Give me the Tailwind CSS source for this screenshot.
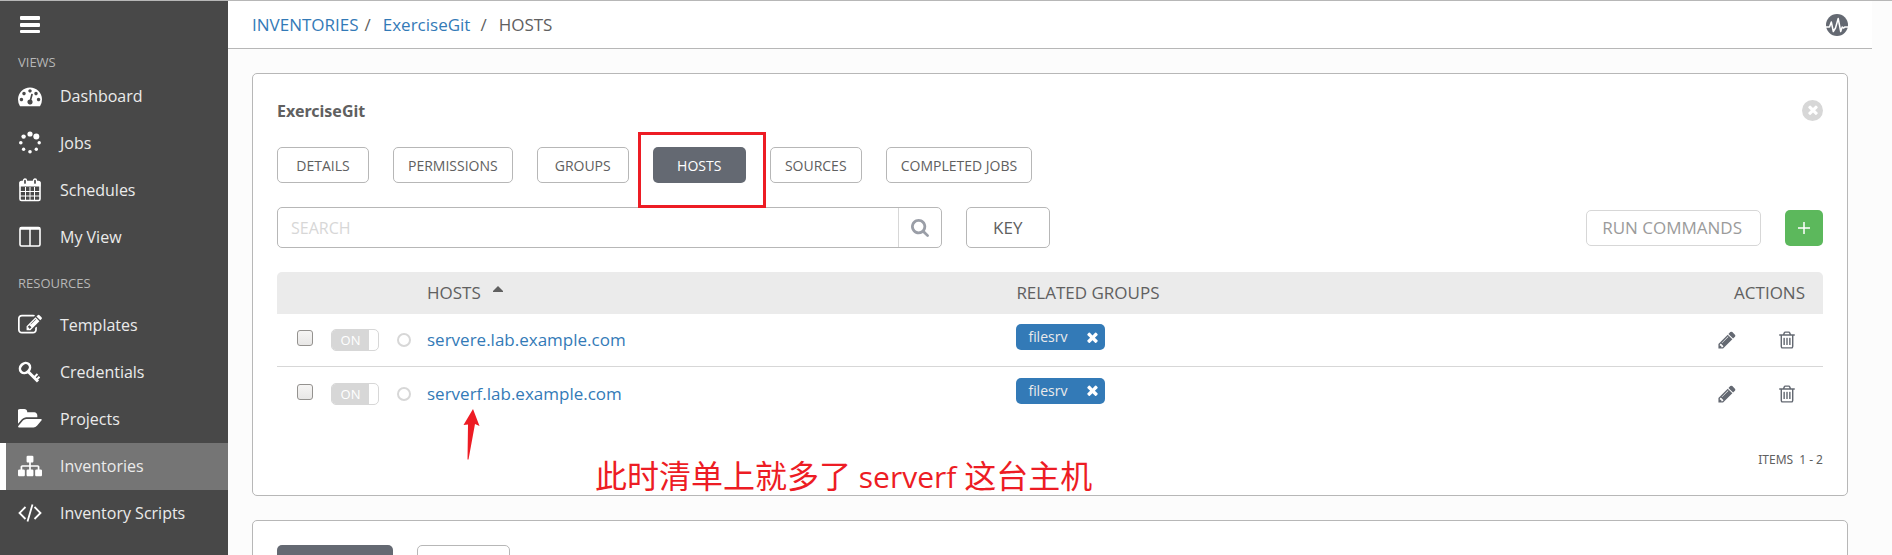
<!DOCTYPE html>
<html lang="en">
<head>
<meta charset="utf-8">
<title>ExerciseGit hosts</title>
<script src="https://cdn.jsdelivr.net/npm/@tailwindcss/browser@4"></script>
</head>
<body class="font-['Open_Sans','Noto_Sans_CJK_SC',sans-serif] text-[#606060]">
<svg class="hidden" aria-hidden="true">
  <symbol id="pencil" viewBox="0 0 1792 1792"><path d="M491 1536l91-91-235-235-91 91v107h128v128h107zm523-928q0-22-22-22-10 0-17 7l-542 542q-7 7-7 17 0 22 22 22 10 0 17-7l542-542q7-7 7-17zm-54-192l416 416-832 832h-416v-416zm683 96q0 53-37 90l-166 166-416-416 166-165q36-38 90-38 53 0 91 38l235 234q37 39 37 91z"/></symbol>
  <symbol id="trash" viewBox="0 0 1792 1792"><path d="M704 736v576q0 14-9 23t-23 9h-64q-14 0-23-9t-9-23v-576q0-14 9-23t23-9h64q14 0 23 9t9 23zm256 0v576q0 14-9 23t-23 9h-64q-14 0-23-9t-9-23v-576q0-14 9-23t23-9h64q14 0 23 9t9 23zm256 0v576q0 14-9 23t-23 9h-64q-14 0-23-9t-9-23v-576q0-14 9-23t23-9h64q14 0 23 9t9 23zm128 724v-948h-896v948q0 22 7 40.5t14.5 27 10.5 8.5h832q3 0 10.5-8.5t14.5-27 7-40.5zm-672-1076h448l-48-117q-7-9-17-11h-317q-10 2-17 11zm928 32v64q0 14-9 23t-23 9h-96v948q0 83-47 143.5t-113 60.5h-832q-66 0-113-58.5t-47-141.5v-952h-96q-14 0-23-9t-9-23v-64q0-14 9-23t23-9h309l70-167q15-37 54-63t79-26h320q40 0 79 26t54 63l70 167h309q14 0 23 9t9 23z"/></symbol>
  <symbol id="times" viewBox="302 302 1188 1252"><path d="M1490 1322q0 40-28 68l-136 136q-28 28-68 28t-68-28l-294-294-294 294q-28 28-68 28t-68-28l-136-136q-28-28-28-68t28-68l294-294-294-294q-28-28-28-68t28-68l136-136q28-28 68-28t68 28l294 294 294-294q28-28 68-28t68 28l136 136q28 28 28 68t-28 68l-294 294 294 294q28 28 28 68z"/></symbol>
</svg>
<div class="flex h-screen overflow-hidden border-t border-[#b7b7b7] bg-[#fcfcfc]">
  <nav class="w-[228px] shrink-0 bg-[#484848] text-base text-[#ebebeb]" aria-label="Main">
    <button class="flex h-[47px] w-full items-center pl-5 text-white" aria-label="Toggle menu">
      <svg class="h-[18px] w-5" viewBox="0 0 20 18" fill="currentColor"><rect y="0" width="20" height="4" rx="1"/><rect y="7" width="20" height="4" rx="1"/><rect y="14" width="20" height="3" rx="1"/></svg>
    </button>
    <h2 class="h-[25px] pt-1 pl-[18px] text-[13px] leading-5 text-[#b7b7b7]">VIEWS</h2>
    <a href="#" class="flex h-[47px] items-center gap-[18px] pb-px pl-[18px]">
      <svg class="size-6" viewBox="0 0 1792 1792" fill="#fff"><path d="M384 1152q0-53-37.5-90.5t-90.5-37.5-90.5 37.5-37.5 90.5 37.5 90.5 90.5 37.5 90.5-37.5 37.5-90.5zm192-448q0-53-37.5-90.5t-90.5-37.5-90.5 37.5-37.5 90.5 37.5 90.5 90.5 37.5 90.5-37.5 37.5-90.5zm428 481l101-382q6-26-7.5-48.5t-38.5-29.5-48 6.5-30 39.5l-101 382q-60 5-107 43.5t-63 98.5q-20 77 20 146t117 89 146-20 89-117q16-60-6-117t-72-91zm660-33q0-53-37.5-90.5t-90.5-37.5-90.5 37.5-37.5 90.5 37.5 90.5 90.5 37.5 90.5-37.5 37.5-90.5zm-640-640q0-53-37.5-90.5t-90.5-37.5-90.5 37.5-37.5 90.5 37.5 90.5 90.5 37.5 90.5-37.5 37.5-90.5zm448 192q0-53-37.5-90.5t-90.5-37.5-90.5 37.5-37.5 90.5 37.5 90.5 90.5 37.5 90.5-37.5 37.5-90.5zm320 448q0 261-141 483-19 29-54 29h-1402q-35 0-54-29-141-221-141-483 0-182 71-348t191-286 286-191 348-71 348 71 286 191 191 286 71 348z"/></svg>
      Dashboard</a>
    <a href="#" class="flex h-[47px] items-center gap-[18px] pb-px pl-[18px]">
      <svg class="size-6" viewBox="0 0 24 24" fill="#fff"><circle cx="12" cy="3" r="2.6"/><circle cx="18.3" cy="5.6" r="3"/><circle cx="5.6" cy="5.6" r="2.2"/><circle cx="2.8" cy="11.8" r="1.8"/><circle cx="21.2" cy="11.8" r="1.7"/><circle cx="5.6" cy="18.2" r="1.7"/><circle cx="18.3" cy="18.2" r="1.7"/><circle cx="12" cy="20.8" r="1.8"/></svg>
      Jobs</a>
    <a href="#" class="flex h-[47px] items-center gap-[18px] pb-px pl-[18px]">
      <svg class="size-6" viewBox="0 0 24 24" fill="none" stroke="#fff"><rect x="2" y="3.5" width="20" height="19" rx="1.5" stroke-width="1.6"/><path d="M1.5 4h21v4.5h-21z" fill="#fff" stroke="none"/><path d="M7.5 9v13M12 9v13M16.500 9v13M2 13.500h20M2 18h20"/><rect x="5.500" y="1" width="3" height="5.500" rx="1.500" fill="#484848" stroke-width="1.300"/><rect x="15.500" y="1" width="3" height="5.500" rx="1.500" fill="#484848" stroke-width="1.300"/></svg>
      Schedules</a>
    <a href="#" class="flex h-[47px] items-center gap-[18px] pb-px pl-[18px]">
      <svg class="size-6" viewBox="0 0 24 24" fill="none" stroke="#fff"><rect x="2" y="2.500" width="20" height="18.500" rx="1.500" stroke-width="1.600"/><path d="M12 4v17" stroke-width="1.500"/><path d="M2 3.500h20" stroke-width="2.500"/></svg>
      My View</a>
    <h2 class="h-[41px] pt-3 pl-[18px] text-[13px] leading-5 text-[#b7b7b7]">RESOURCES</h2>
    <a href="#" class="flex h-[47px] items-center gap-[18px] pb-px pl-[18px]">
      <svg class="size-6" viewBox="0 0 1792 1792" fill="#fff"><path d="M888 1184l116-116-152-152-116 116v56h96v96h56zm440-720q-16-16-33 1l-350 350q-17 17-1 33t33-1l350-350q17-17 1-33zm80 594v190q0 119-84.500 203.500t-203.500 84.500h-832q-119 0-203.500-84.500t-84.500-203.500v-832q0-119 84.500-203.500t203.500-84.500h832q63 0 117 25 15 7 18 23 3 17-9 29l-49 49q-14 14-32 8-23-6-45-6h-832q-66 0-113 47t-47 113v832q0 66 47 113t113 47h832q66 0 113-47t47-113v-126q0-13 9-22l64-64q15-15 35-7t20 29zm-96-738l288 288-672 672h-288v-288zm444 132l-92 92-288-288 92-92q28-28 68-28t68 28l152 152q28 28 28 68t-28 68z"/></svg>
      Templates</a>
    <a href="#" class="flex h-[47px] items-center gap-[18px] pb-px pl-[18px]">
      <svg class="size-6" viewBox="0 0 24 24" fill="none" stroke="#fff"><ellipse cx="7" cy="8" rx="5.400" ry="4.600" transform="rotate(-45 7 8)" stroke-width="2.600"/><path d="M9.500 11l10.500 10.500" stroke-width="3"/><path d="M16 17.500l3.500-3.500M18.500 19.800l3-3" stroke-width="2"/></svg>
      Credentials</a>
    <a href="#" class="flex h-[47px] items-center gap-[18px] pb-px pl-[18px]">
      <svg class="size-6" viewBox="0 0 1830 1792" fill="#fff"><path d="M1815 952q0 31-31 66l-336 396q-43 51-120.500 86.500t-143.500 35.500h-1088q-34 0-60.500-13t-26.500-43q0-31 31-66l336-396q43-51 120.500-86.500t143.500-35.500h1088q34 0 60.500 13t26.500 43zm-343-344v160h-832q-94 0-197 47.500t-164 119.500l-337 396-5 6q0-4-.5-12.500t-.5-12.500v-960q0-92 66-158t158-66h320q92 0 158 66t66 158v32h544q92 0 158 66t66 158z"/></svg>
      Projects</a>
    <a href="#" class="flex h-[47px] items-center gap-[18px] border-l-6 border-white bg-[#757575] pb-px pl-3" aria-current="page">
      <svg class="size-6" viewBox="0 0 1792 1792" fill="#fff"><path d="M1792 1248v320q0 40-28 68t-68 28h-320q-40 0-68-28t-28-68v-320q0-40 28-68t68-28h96v-192h-512v192h96q40 0 68 28t28 68v320q0 40-28 68t-68 28h-320q-40 0-68-28t-28-68v-320q0-40 28-68t68-28h96v-192h-512v192h96q40 0 68 28t28 68v320q0 40-28 68t-68 28h-320q-40 0-68-28t-28-68v-320q0-40 28-68t68-28h96v-192q0-52 38-90t90-38h512v-192h-96q-40 0-68-28t-28-68v-320q0-40 28-68t68-28h320q40 0 68 28t28 68v320q0 40-28 68t-68 28h-96v192h512q52 0 90 38t38 90v192h96q40 0 68 28t28 68z"/></svg>
      Inventories</a>
    <a href="#" class="flex h-[47px] items-center gap-[18px] pb-px pl-[18px]">
      <svg class="size-6" viewBox="0 0 24 24" fill="none" stroke="#fff" stroke-width="1.800"><path d="M7.500 6L1.500 12l6 6M16.500 6l6 6-6 6M14.500 3.500l-5 17"/></svg>
      Inventory Scripts</a>
  </nav>

  <div class="mr-5 flex min-w-0 flex-1 flex-col">
    <header class="flex h-12 shrink-0 items-center justify-between border-b border-[#b7b7b7] bg-white px-6">
      <nav class="flex items-center pt-px text-[17px]" aria-label="Breadcrumb">
        <a href="#" class="text-[#337ab7]">INVENTORIES</a><span class="pr-3 pl-[6px]">/</span><a href="#" class="text-[#337ab7]">ExerciseGit</a><span class="px-3 pl-[10px]">/</span><span>HOSTS</span>
      </nav>
      <button aria-label="Activity stream">
        <svg class="size-[22px]" viewBox="0 0 22 22"><circle cx="11" cy="11" r="11" fill="#646972"/><path d="M0 13h3.500l1.800-5 2 9.500L9.500 14l2.700-9.500 2.500 13 1.500-4.500 1.200 1L19 13h3" fill="none" stroke="#fff" stroke-width="1.500" stroke-linejoin="round"/></svg>
      </button>
    </header>

    <main class="flex flex-col gap-6 p-6">
      <section class="relative rounded-[5px] border border-[#b7b7b7] bg-white p-6">
        <div class="flex h-6 items-center justify-between">
          <h1 class="pt-px font-['Noto_Sans',sans-serif] text-base font-bold">ExerciseGit</h1>
          <button class="flex size-[21px] items-center justify-center rounded-full bg-[#d7d7d7] text-white" aria-label="Close"><svg class="size-[10px]" fill="currentColor"><use href="#times"/></svg></button>
        </div>
        <div class="mt-[25px] flex gap-6 text-sm">
          <button class="h-9 min-w-[92px] rounded-[5px] border border-[#b7b7b7] px-[14px] pt-px">DETAILS</button>
          <button class="h-9 min-w-[92px] rounded-[5px] border border-[#b7b7b7] px-[14px] pt-px">PERMISSIONS</button>
          <button class="h-9 min-w-[92px] rounded-[5px] border border-[#b7b7b7] px-[14px] pt-px">GROUPS</button>
          <div class="relative">
            <button class="h-9 min-w-[93px] rounded-[5px] bg-[#646972] px-3 pt-px text-white">HOSTS</button>
            <span class="pointer-events-none absolute -top-[15px] -left-[15px] z-10 h-[76px] w-32 border-3 border-[#ed1c24]"></span>
          </div>
          <button class="h-9 min-w-[92px] rounded-[5px] border border-[#b7b7b7] px-3 pt-px">SOURCES</button>
          <button class="h-9 min-w-[92px] rounded-[5px] border border-[#b7b7b7] px-[14px] pt-px">COMPLETED JOBS</button>
        </div>
        <div class="mt-6 flex items-center gap-6 text-base">
          <form class="flex h-[41px] w-[43%] rounded-[5px] border border-[#b7b7b7]">
            <input class="min-w-0 flex-1 px-[13px] placeholder-[#d7d7d7] outline-none" type="text" placeholder="SEARCH" aria-label="Search">
            <button type="button" class="flex w-[43px] items-center justify-center border-l border-[#d7d7d7] text-[#9a9ea7]" aria-label="Run search"><svg class="size-[18px]" viewBox="64 128 1664 1664" fill="currentColor"><path d="M1216 832q0-185-131.500-316.500t-316.500-131.500-316.500 131.500-131.500 316.500 131.500 316.500 316.500 131.500 316.500-131.500 131.500-316.500zm512 832q0 52-38 90t-90 38q-54 0-90-38l-343-342q-179 124-399 124-143 0-273.500-55.500t-225-150-150-225-55.500-273.500 55.500-273.500 150-225 225-150 273.500-55.500 273.500 55.500 225 150 150 225 55.500 273.500q0 220-124 399l343 343q37 37 37 90z"/></svg></button>
          </form>
          <button class="h-[41px] w-21 rounded-[5px] border border-[#b7b7b7] text-[17px]">KEY</button>
          <button class="ml-auto h-9 rounded-[5px] border border-[#d7d7d7] px-[15px] pr-[18px] text-[17px] text-[#9b9b9b]">RUN COMMANDS</button>
          <button class="flex h-9 w-[38px] items-center justify-center rounded-[5px] bg-[#5cb85c] text-white" aria-label="Add host"><svg class="size-3" viewBox="0 0 12 12" stroke="currentColor" stroke-width="1.500"><path d="M6 0v12M0 6h12"/></svg></button>
        </div>

        <table class="mt-6 w-full table-fixed border-separate border-spacing-0 text-left text-[17px]">
          <colgroup><col class="w-[150px]"><col><col class="w-[34%]"><col class="w-[281px]"></colgroup>
          <thead>
            <tr class="h-[42px]">
              <th class="rounded-tl-[5px] bg-[#ebebeb]" aria-label="Status"></th>
              <th class="bg-[#ebebeb] p-0 font-normal"><span class="flex items-center gap-3">HOSTS <svg class="mb-2 h-[6px] w-[10px]" viewBox="0 0 10 6" fill="currentColor"><path d="M5 0l5 5v1H0V5z"/></svg></span></th>
              <th class="bg-[#ebebeb] p-0 font-normal">RELATED GROUPS</th>
              <th class="rounded-tr-[5px] bg-[#ebebeb] p-0 pr-[18px] text-right font-normal">ACTIONS</th>
            </tr>
          </thead>
          <tbody>
            <tr class="h-[53px]">
              <td class="border-b border-[#d7d7d7] p-0 pl-5"><div class="flex items-center">
                <input type="checkbox" aria-label="Select servere.lab.example.com" class="mb-1 size-4 appearance-none rounded-[3px] border border-[#94928f] bg-linear-to-b from-[#f6f5f4] to-[#e8e7e6]">
                <button class="ml-[18px] flex h-[22px] w-12 overflow-hidden rounded-[5px] border border-[#d7d7d7] text-[13px] text-white" role="switch" aria-checked="true" aria-label="Host on"><span class="h-full w-[37px] bg-[#d7d7d7] leading-5">ON</span></button>
                <span class="ml-[18px] size-[14px] rounded-full border-2 border-[#d7d7d7]"></span></div></td>
              <td class="border-b border-[#d7d7d7] p-0"><a href="#" class="text-[#337ab7]">servere.lab.example.com</a></td>
              <td class="border-b border-[#d7d7d7] p-0 pb-[6px]"><span class="flex h-[26px] w-[89px] items-center justify-between rounded-[5px] bg-[#337ab7] pr-[7px] pl-3 text-sm text-[#ebebeb]">filesrv<button aria-label="Remove group filesrv" class="text-white"><svg class="size-[11px]" fill="currentColor"><use href="#times"/></svg></button></span></td>
              <td class="border-b border-[#d7d7d7] p-0 pr-[26px]"><div class="flex justify-end gap-10 text-[#646972]"><button aria-label="Edit host"><svg class="size-5" fill="currentColor"><use href="#pencil"/></svg></button><button aria-label="Delete host"><svg class="size-5" fill="currentColor"><use href="#trash"/></svg></button></div></td>
            </tr>
            <tr class="h-[53px]">
              <td class="p-0 pl-5"><div class="flex items-center">
                <input type="checkbox" aria-label="Select serverf.lab.example.com" class="mb-1 size-4 appearance-none rounded-[3px] border border-[#94928f] bg-linear-to-b from-[#f6f5f4] to-[#e8e7e6]">
                <button class="ml-[18px] flex h-[22px] w-12 overflow-hidden rounded-[5px] border border-[#d7d7d7] text-[13px] text-white" role="switch" aria-checked="true" aria-label="Host on"><span class="h-full w-[37px] bg-[#d7d7d7] leading-5">ON</span></button>
                <span class="ml-[18px] size-[14px] rounded-full border-2 border-[#d7d7d7]"></span></div></td>
              <td class="p-0"><a href="#" class="text-[#337ab7]">serverf.lab.example.com</a></td>
              <td class="p-0 pb-[6px]"><span class="flex h-[26px] w-[89px] items-center justify-between rounded-[5px] bg-[#337ab7] pr-[7px] pl-3 text-sm text-[#ebebeb]">filesrv<button aria-label="Remove group filesrv" class="text-white"><svg class="size-[11px]" fill="currentColor"><use href="#times"/></svg></button></span></td>
              <td class="p-0 pr-[26px]"><div class="flex justify-end gap-10 text-[#646972]"><button aria-label="Edit host"><svg class="size-5" fill="currentColor"><use href="#pencil"/></svg></button><button aria-label="Delete host"><svg class="size-5" fill="currentColor"><use href="#trash"/></svg></button></div></td>
            </tr>
          </tbody>
        </table>
        <div class="mt-7 flex h-[23px] items-center justify-end gap-[6px] font-['Noto_Sans',sans-serif] text-xs"><span>ITEMS</span><span>1 - 2</span></div>

        <svg class="absolute top-[335px] left-[210px] h-[51px] w-[18px]" viewBox="0 0 18 51" fill="#ed1c24" aria-hidden="true"><path d="M10 0l6.500 17-4.500-2-6.500 35.500h-1L5 15.500.5 16z"/></svg>
        <p class="absolute top-[380px] left-[342px] text-[32px] leading-11 whitespace-nowrap text-[#ed1c24]">此时清单上就多了<span class="text-[30px]"> serverf </span>这台主机</p>
      </section>

      <section class="rounded-[5px] border border-[#b7b7b7] bg-white p-6">
        <div class="flex gap-6">
          <button class="h-9 w-[116px] rounded-[5px] bg-[#646972]" aria-label="Inventories"></button>
          <button class="h-9 w-[93px] rounded-[5px] border border-[#b7b7b7]" aria-label="Hosts"></button>
        </div>
      </section>
    </main>
  </div>
</div>
</body>
</html>
